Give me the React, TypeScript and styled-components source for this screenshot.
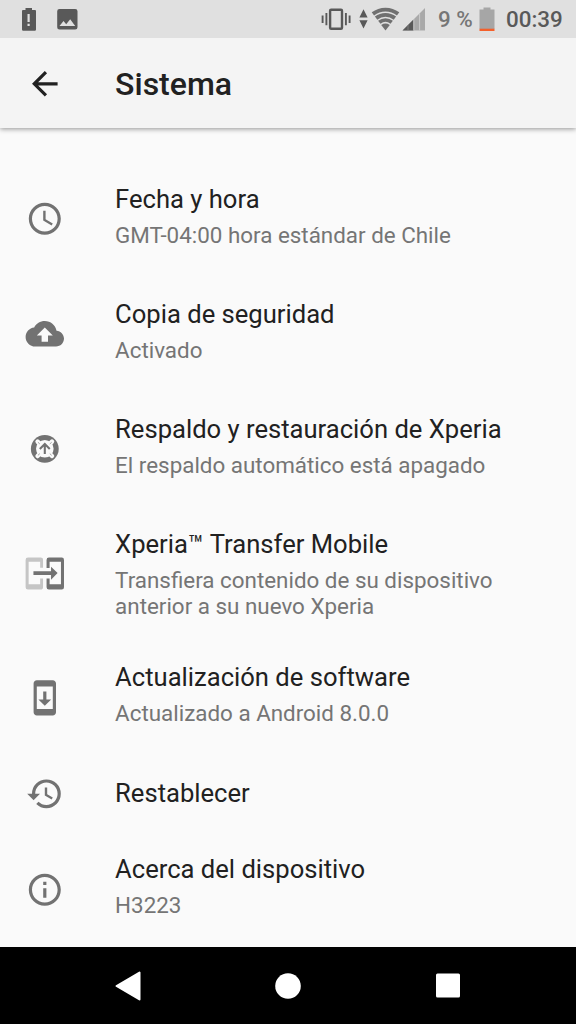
import React from 'react';
import styled, { createGlobalStyle } from 'styled-components';

const Global = createGlobalStyle`
  * { box-sizing: border-box; }
  body { margin: 0; background: #fafafa; font-family: Roboto, 'Noto Sans', sans-serif; }
`;

const Screen = styled.div`
  width: 576px;
  height: 1024px;
  display: flex;
  flex-direction: column;
  overflow: hidden;
  background: #fafafa;
`;

const StatusBar = styled.div`
  flex: 0 0 38px;
  display: flex;
  justify-content: space-between;
  background: #e0e0e0;
  z-index: 2;
`;

const StatusGroup = styled.div`
  display: flex;
  height: 38px;
`;

const StatusText = styled.span<{ $tone: string; $width: number; $indent?: number }>`
  width: ${(p) => p.$width}px;
  padding-left: ${(p) => p.$indent ?? 0}px;
  font-size: 22.4px;
  font-weight: 500;
  line-height: 39px;
  white-space: nowrap;
  color: ${(p) => p.$tone};
`;

const Header = styled.header`
  flex: 0 0 90px;
  display: flex;
  align-items: center;
  padding-left: 25px;
  background: #f4f4f4;
  box-shadow: 0 1px 5px rgba(0, 0, 0, 0.42);
  z-index: 1;
`;

const HeaderTitle = styled.h1`
  margin: 1px 0 0 51.1px;
  font-size: 32px;
  font-weight: 500;
  line-height: 38px;
  color: #212121;
`;

const List = styled.main`
  flex: 1;
  padding-top: 33px;
`;

const Row = styled.div<{ $height: number; $single?: boolean }>`
  display: flex;
  align-items: ${(p) => (p.$single ? 'center' : 'stretch')};
  height: ${(p) => p.$height}px;
  padding-left: 25px;
`;

const IconCell = styled.div`
  flex: 0 0 90.1px;
  display: flex;
  align-items: center;
`;

const Copy = styled.div<{ $single?: boolean }>`
  padding-top: ${(p) => (p.$single ? 0 : 21)}px;
`;

const Title = styled.div`
  font-size: 25.6px;
  line-height: 34px;
  color: #212121;
  white-space: nowrap;
`;

const Summary = styled.div`
  margin-top: 6px;
  font-size: 22.4px;
  line-height: 26px;
  color: #757575;
  white-space: pre-line;
`;

const NavBar = styled.nav`
  flex: 0 0 77px;
  display: flex;
  justify-content: center;
  background: #000;
`;

const NavButton = styled.div`
  width: 160px;
  display: flex;
  align-items: center;
  justify-content: center;
`;

const Icon = ({ children, color = '#727272' }: { children: React.ReactNode; color?: string }) => (
  <svg width="39" height="39" viewBox="-0.375 -0.375 24.375 24.375" fill={color}>
    {children}
  </svg>
);

const Clock = () => (
  <Icon>
    <path d="M11.99 2C6.47 2 2 6.48 2 12s4.47 10 9.99 10C17.52 22 22 17.52 22 12S17.52 2 11.99 2zM12 20c-4.42 0-8-3.58-8-8s3.58-8 8-8 8 3.58 8 8-3.58 8-8 8zm.5-13H11v6l5.25 3.15.75-1.23-4.5-2.67z" />
  </Icon>
);
const Cloud = () => (
  <Icon>
    <path d="M19.35 10.04C18.67 6.59 15.64 4 12 4 9.11 4 6.6 5.64 5.35 8.04 2.34 8.36 0 10.91 0 14c0 3.31 2.69 6 6 6h13c2.76 0 5-2.24 5-5 0-2.64-2.05-4.78-4.65-4.96zM14 13v4h-4v-4H7l5-5 5 5h-3z" />
  </Icon>
);
const Backup = () => (
  <Icon>
    <circle cx="12" cy="12" r="8.7" />
    <circle cx="12" cy="12" r="5.5" fill="#fafafa" />
    <path d="M7.5 7.5l9 9M16.5 7.5l-9 9" stroke="#fafafa" strokeWidth="2.8" strokeLinecap="round" />
    <path d="M7.7 7.9l1.2 1.1M16.3 7.9l-1.2 1.1M7.7 16.1l1.2-1.1M16.3 16.1l-1.2-1.1" stroke="#a0a0a0" strokeWidth=".6" />
    <path d="M12 15.2V9.3M8.9 12.1L12 9l3.1 3.1" fill="none" stroke="#727272" strokeWidth="1.3" />
  </Icon>
);
const Transfer = () => (
  <Icon>
    <path d="M10.9 8.9V4Q10.9 2.5 9.3 2.5H1.5Q0 2.5 0 4v17q0 1.5 1.5 1.5h7.8q1.6 0 1.6-1.5v-5.4H9.1v3.6H1.9V5.1h7.2v3.8z" fill="#c5c5c5" />
    <path d="M13.1 9V4q0-1.5 1.5-1.5h8Q24 2.5 24 4v17q0 1.5-1.4 1.5h-8q-1.5 0-1.5-1.5v-5.4h1.9v3.6h7.1V5.1h-7.1V9z" />
    <path d="M4.9 11.1h11V8.2l4.1 4-4.1 4.2v-3.1H4.9z" />
  </Icon>
);
const Update = () => (
  <Icon>
    <path d="M17 1.01L7 1c-1.1 0-2 .9-2 2v18c0 1.1.9 2 2 2h10c1.1 0 2-.9 2-2V3c0-1.1-.9-1.99-2-1.99zM17 19H7V5h10v14zm-1-6h-3V8h-2v5H8l4 4 4-4z" />
  </Icon>
);
const Restore = () => (
  <Icon>
    <path d="M13 3a9 9 0 0 0-9 9H1l3.89 3.89.07.14L9 12H6c0-3.87 3.13-7 7-7s7 3.13 7 7-3.13 7-7 7c-1.93 0-3.68-.79-4.94-2.06l-1.42 1.42A8.95 8.95 0 0 0 13 21a9 9 0 0 0 0-18zm-1 5v5l4.28 2.54.72-1.21-3.5-2.08V8z" />
  </Icon>
);
const Info = () => (
  <Icon>
    <path d="M11 17h2v-6h-2v6zm1-15C6.48 2 2 6.48 2 12s4.48 10 10 10 10-4.48 10-10S17.52 2 12 2zm0 18c-4.41 0-8-3.59-8-8s3.59-8 8-8 8 3.59 8 8-3.59 8-8 8zM11 9h2V7h-2v2z" />
  </Icon>
);

const items = [
  { icon: Clock, title: 'Fecha y hora', summary: 'GMT-04:00 hora estándar de Chile', height: 115 },
  { icon: Cloud, title: 'Copia de seguridad', summary: 'Activado', height: 115 },
  { icon: Backup, title: 'Respaldo y restauración de Xperia', summary: 'El respaldo automático está apagado', height: 115 },
  { icon: Transfer, title: 'Xperia™ Transfer Mobile', summary: 'Transfiera contenido de su dispositivo\nanterior a su nuevo Xperia', height: 133 },
  { icon: Update, title: 'Actualización de software', summary: 'Actualizado a Android 8.0.0', height: 116 },
  { icon: Restore, title: 'Restablecer', height: 76 },
  { icon: Info, title: 'Acerca del dispositivo', summary: 'H3223', height: 116 },
];

const NotificationIcons = () => (
  <svg width="100" height="38" fill="#595959">
    <path fillRule="evenodd" d="M25.5 8h6.5v2h3q1 0 1 1v18.5q0 1.2-1.2 1.2H23.2q-1.2 0-1.2-1.2V11q0-1 1-1h2.5zM27.5 14v8h2.2v-8zm0 9.8V26h2.2v-2.2z" />
    <path fillRule="evenodd" d="M59.5 9h15.7q2.3 0 2.3 2.3v15.9q0 2.3-2.3 2.3H59.5q-2.3 0-2.3-2.3V11.3q0-2.3 2.3-2.3zM59.5 26h15.7l-5-6.8-4 5-2.7-3.2z" />
  </svg>
);

const SignalIcons = () => (
  <svg width="118" height="38" viewBox="310 0 118 38">
    <rect x="330.1" y="9.7" width="11.9" height="19" rx="1" fill="none" stroke="#595959" strokeWidth="2.4" />
    <path d="M326.4 13v12.2M345.9 13v12.2M322.6 15.5v7.5M349.6 15.5v7.5" stroke="#595959" strokeWidth="1.9" />
    <path d="M363.5 9.3l4.1 8.2h-8.2zM363.5 28.5l4.1-8.2h-8.2z" fill="#595959" />
    <g fill="none" stroke="#707070" strokeWidth="3.9">
      <path d="M372.9 13.9a20.7 20.7 0 0 1 25.2 0" />
      <path d="M376.1 18.1a15.4 15.4 0 0 1 18.8 0" />
      <path d="M379.3 22.2a10.2 10.2 0 0 1 12.4 0" />
    </g>
    <path d="M385.5 30.5l-4.3-5.6q4.3-2.9 8.6 0z" fill="#707070" />
    <path d="M402.5 30.5L425 8v22.5z" fill="#a9a9a9" />
    <path d="M402.5 30.5l11-11v11z" fill="#595959" />
    <path d="M413.8 19.2v11.3M419.6 13.4v17.1" stroke="#cfcfcf" strokeWidth=".9" />
    <path d="M408 25v5.5" stroke="#8a8a8a" strokeWidth=".7" />
  </svg>
);

const BatteryIcon = () => (
  <svg width="28" height="38" viewBox="478 0 28 38">
    <path d="M483.5 7.5h7v2h4V29h-15V9.5h4z" fill="#a6a6a6" />
    <path d="M479.5 28.7h15v2.3h-15z" fill="#f4602b" />
  </svg>
);

export default function App() {
  return (
    <>
      <Global />
      <Screen>
        <StatusBar>
          <StatusGroup>
            <NotificationIcons />
          </StatusGroup>
          <StatusGroup>
            <SignalIcons />
            <StatusText $tone="#767676" $width={50} $indent={10}>9 %</StatusText>
            <BatteryIcon />
            <StatusText $tone="#595959" $width={70}>00:39</StatusText>
          </StatusGroup>
        </StatusBar>
        <Header>
          <Icon color="#212121">
            <path d="M20 11H7.83l5.59-5.59L12 4l-8 8 8 8 1.41-1.41L7.83 13H20v-2z" />
          </Icon>
          <HeaderTitle>Sistema</HeaderTitle>
        </Header>
        <List>
          {items.map(({ icon: Glyph, title, summary, height }) => (
            <Row key={title} $height={height} $single={!summary}>
              <IconCell><Glyph /></IconCell>
              <Copy $single={!summary}>
                <Title>{title}</Title>
                {summary && <Summary>{summary}</Summary>}
              </Copy>
            </Row>
          ))}
        </List>
        <NavBar>
          <NavButton>
            <svg width="28" height="32" viewBox="0 0 28 32">
              <path d="M2.5 16L25.5 2.5v27z" fill="#fff" stroke="#fff" strokeWidth="2" strokeLinejoin="round" />
            </svg>
          </NavButton>
          <NavButton>
            <svg width="26" height="26"><circle cx="13" cy="13" r="12.8" fill="#fff" /></svg>
          </NavButton>
          <NavButton>
            <svg width="24" height="25"><rect y=".5" width="24" height="24" rx="1.5" fill="#fff" /></svg>
          </NavButton>
        </NavBar>
      </Screen>
    </>
  );
}
